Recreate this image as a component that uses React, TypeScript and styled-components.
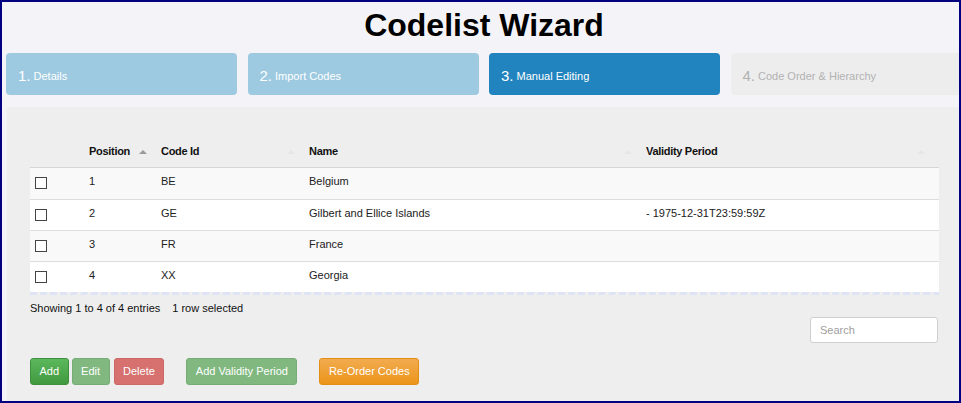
import React from "react";
import styled, { createGlobalStyle, css } from "styled-components";

const Global = createGlobalStyle`
  html, body { margin: 0; padding: 0; background: #ffffff; }
  body { font-family: "Liberation Sans", Arial, sans-serif; }
  * { box-sizing: border-box; }
`;

const Frame = styled.div`
  width: 961px;
  height: 403px;
  border: 2px solid #000080;
  background: #f4f4f8;
  overflow: hidden;
  display: flex;
  flex-direction: column;
`;

const Title = styled.h1`
  margin: 0;
  height: 51px;
  padding: 5px 0 0 7px;
  text-align: center;
  font-size: 32px;
  line-height: 36px;
  font-weight: bold;
  color: #000;
`;

const Steps = styled.div`
  display: grid;
  grid-template-columns: 231px 231px 231px 1fr;
  column-gap: 10.5px;
  padding: 0 0 0 4px;
  height: 42px;
`;

type StepState = "done" | "active" | "todo";

const Step = styled.div<{ $state: StepState }>`
  border-radius: 4px;
  display: flex;
  align-items: center;
  padding: 3px 0 0 12px;
  color: #fff;
  ${(p) =>
    p.$state === "done" &&
    css`
      background: #9ecae1;
    `}
  ${(p) =>
    p.$state === "active" &&
    css`
      background: #2184be;
    `}
  ${(p) =>
    p.$state === "todo" &&
    css`
      background: #ededed;
      color: #b2b2b2;
      border-radius: 4px 0 0 4px;
    `}
`;

const StepNum = styled.span`
  font-size: 15px;
  margin-right: 3px;
`;

const StepLabel = styled.span`
  font-size: 11px;
`;

const Panel = styled.div`
  flex: 1;
  margin: 12px 0 0 5px;
  background: #eeeeee;
  padding: 28px 20px 0 23px;
`;

const Cols = css`
  display: grid;
  grid-template-columns: 59px 72px 148px 337px 1fr;
`;

const HeadRow = styled.div`
  ${Cols};
  align-items: center;
  height: 33px;
  border-bottom: 1px solid #d6d6d6;
  box-shadow: 0 1px 0 #e4e4e4;
  font-size: 11px;
  letter-spacing: -0.3px;
  font-weight: bold;
  color: #111;
`;

const HeadCell = styled.div`
  display: flex;
  align-items: center;
  position: relative;
  height: 100%;
`;

const SortUp = styled.span<{ $faint?: boolean }>`
  position: absolute;
  right: 14px;
  top: 15px;
  width: 0;
  height: 0;
  border-left: 4px solid transparent;
  border-right: 4px solid transparent;
  border-bottom: 4px solid ${(p) => (p.$faint ? "#e6e6e6" : "#9a9a9a")};
`;

const Row = styled.div<{ $odd: boolean }>`
  ${Cols};
  align-items: start;
  height: 31px;
  background: ${(p) => (p.$odd ? "#f9f9f9" : "#ffffff")};
  border-top: 1px solid #dddddd;
  font-size: 11px;
  line-height: 13px;
  color: #222;
  &:first-of-type {
    border-top: none;
  }
`;

const Cell = styled.div`
  padding-top: 7px;
  white-space: nowrap;
`;

const Check = styled.span`
  display: block;
  width: 12px;
  height: 12px;
  margin: 2px 0 0 5px;
  border: 1px solid #444;
  background: #fff;
`;

const Wave = styled.div`
  height: 3px;
  background: repeating-linear-gradient(
    100deg,
    #dfe3f6 0px,
    #dfe3f6 7px,
    transparent 7px,
    transparent 10px
  );
`;

const Info = styled.div`
  font-size: 11px;
  color: #111;
  margin-top: 7px;
  height: 14px;
  span + span {
    margin-left: 12px;
  }
`;

const SearchRow = styled.div`
  display: flex;
  justify-content: flex-end;
  margin-top: 1px;
`;

const Search = styled.input`
  width: 128px;
  height: 26px;
  border: 1px solid #cfcfcf;
  border-radius: 3px;
  background: #fff;
  padding: 0 9px;
  font-family: "Liberation Sans", Arial, sans-serif;
  font-size: 11px;
  margin-right: 1px;
  outline: none;
  &::placeholder {
    color: #a0a0a0;
  }
`;

const Buttons = styled.div`
  display: flex;
  align-items: center;
  margin-top: 15px;
`;

type Tone = "add" | "edit" | "del" | "period" | "order";

const tones: Record<Tone, ReturnType<typeof css>> = {
  add: css`
    background: linear-gradient(#5cb85c, #41993f);
    border-color: #3e8f3e;
  `,
  edit: css`
    background: #80b880;
    border-color: #76ad76;
  `,
  del: css`
    background: #d6716f;
    border-color: #cc6866;
  `,
  period: css`
    background: #80b880;
    border-color: #76ad76;
  `,
  order: css`
    background: linear-gradient(#f2ab4f, #eb951a);
    border-color: #e38d13;
  `,
};

const Btn = styled.button<{ $tone: Tone; $gap: number }>`
  height: 27px;
  padding: 0 8.5px;
  margin-left: ${(p) => p.$gap}px;
  border: 1px solid;
  border-radius: 3px;
  color: #fff;
  font-family: "Liberation Sans", Arial, sans-serif;
  font-size: 11px;
  line-height: 25px;
  cursor: pointer;
  ${(p) => tones[p.$tone]};
`;

const rows = [
  { pos: "1", id: "BE", name: "Belgium", period: "" },
  { pos: "2", id: "GE", name: "Gilbert and Ellice Islands", period: "- 1975-12-31T23:59:59Z" },
  { pos: "3", id: "FR", name: "France", period: "" },
  { pos: "4", id: "XX", name: "Georgia", period: "" },
];

export default function App() {
  return (
    <>
      <Global />
      <Frame>
        <Title>Codelist Wizard</Title>
        <Steps>
          <Step $state="done">
            <StepNum>1.</StepNum>
            <StepLabel>Details</StepLabel>
          </Step>
          <Step $state="done">
            <StepNum>2.</StepNum>
            <StepLabel>Import Codes</StepLabel>
          </Step>
          <Step $state="active">
            <StepNum>3.</StepNum>
            <StepLabel>Manual Editing</StepLabel>
          </Step>
          <Step $state="todo">
            <StepNum>4.</StepNum>
            <StepLabel>Code Order &amp; Hierarchy</StepLabel>
          </Step>
        </Steps>
        <Panel>
          <HeadRow>
            <HeadCell />
            <HeadCell>
              Position
              <SortUp />
            </HeadCell>
            <HeadCell>
              Code Id
              <SortUp $faint />
            </HeadCell>
            <HeadCell>
              Name
              <SortUp $faint />
            </HeadCell>
            <HeadCell>
              Validity Period
              <SortUp $faint />
            </HeadCell>
          </HeadRow>
          <div>
            {rows.map((r, i) => (
              <Row key={r.pos} $odd={i % 2 === 0}>
                <Cell>
                  <Check />
                </Cell>
                <Cell>{r.pos}</Cell>
                <Cell>{r.id}</Cell>
                <Cell>{r.name}</Cell>
                <Cell>{r.period}</Cell>
              </Row>
            ))}
          </div>
          <Wave />
          <Info>
            <span>Showing 1 to 4 of 4 entries</span>
            <span>1 row selected</span>
          </Info>
          <SearchRow>
            <Search placeholder="Search" />
          </SearchRow>
          <Buttons>
            <Btn $tone="add" $gap={0}>Add</Btn>
            <Btn $tone="edit" $gap={3}>Edit</Btn>
            <Btn $tone="del" $gap={4}>Delete</Btn>
            <Btn $tone="period" $gap={22}>Add Validity Period</Btn>
            <Btn $tone="order" $gap={22}>Re-Order Codes</Btn>
          </Buttons>
        </Panel>
      </Frame>
    </>
  );
}
